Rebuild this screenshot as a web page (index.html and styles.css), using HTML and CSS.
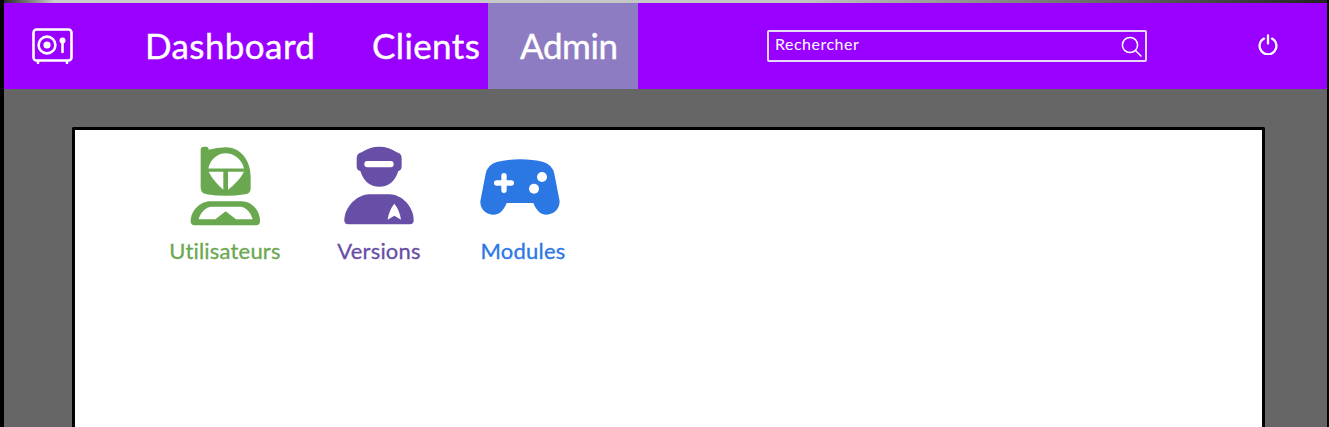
FILE: index.html
```html
<!DOCTYPE html>
<html lang="fr">
<head>
    <title>Admin</title>
    <link rel="stylesheet" href="styles.css">
</head>
<body>
    <header class="topbar">
        <a class="logo" href="#">
            <svg width="42" height="36" viewBox="0 0 42 36" fill="none" stroke="#fff">
                <rect x="1.5" y="1.5" width="38" height="31" rx="3" stroke-width="2.6"/>
                <path d="M6 33v2M35 33v2" stroke-width="2.6" stroke-linecap="round"/>
                <circle cx="15" cy="17" r="8.4" stroke-width="2.6"/>
                <circle cx="15" cy="17" r="3.6" fill="#fff" stroke="none"/>
                <circle cx="30.5" cy="12.5" r="3" fill="#fff" stroke="none"/>
                <path d="M30.5 13v11" stroke-width="2.6" stroke-linecap="round"/>
            </svg>
        </a>
        <nav class="menu">
            <a class="menu-item dashboard" href="#">Dashboard</a>
            <a class="menu-item clients" href="#">Clients</a>
            <a class="menu-item active" href="#">Admin</a>
        </nav>
        <div class="search">
            <span>Rechercher</span>
            <svg width="21" height="21" viewBox="0 0 21 21" fill="none" stroke="#fff" stroke-width="1.5">
                <circle cx="9" cy="9" r="7.6"/>
                <path d="M14.5 14.5l5.5 5.5" stroke-linecap="round"/>
            </svg>
        </div>
        <a class="power" href="#">
            <svg width="20" height="21" viewBox="0 0 20 21" fill="none" stroke="#fff" stroke-width="2.3" stroke-linecap="round">
                <path d="M6 4.6a8.4 8.4 0 1 0 8 0"/>
                <path d="M10 1.5v8"/>
            </svg>
        </a>
    </header>

    <main class="content">
        <section class="tiles">
            <a class="tile green" href="#">
                <svg width="71" height="80" viewBox="90 33 213 239" fill="#6aa84f">
                    <path d="M122 45Q122 35 132 35H138Q146 35 146 44Q170 36 197 36C242 36 272 75 272 125V160Q272 176 255 177Q197 186 140 177Q122 175 122 158Z"/>
                    <path d="M145 100C150 72 173 54 197 54C222 54 246 72 252 100Z" fill="#fff"/>
                    <path d="M146 110H190V164C172 148 156 130 146 110Z" fill="#fff"/>
                    <path d="M204 110H252C242 130 224 148 204 164Z" fill="#fff"/>
                    <path d="M92 258C92 225 122 198 150 198H245C275 198 300 225 300 258Q300 270 288 270H104Q92 270 92 258Z"/>
                    <path d="M116 252C122 232 138 215 155 215H240C258 215 272 232 278 252H228L197 228L166 252Z" fill="#fff"/>
                </svg>
                <span>Utilisateurs</span>
            </a>
            <a class="tile purple" href="#">
                <svg width="71" height="80" viewBox="59 33 213 240" fill="#674ea7">
                    <path d="M97 70Q97 55 112 52Q135 35 165 35Q195 35 217 52Q232 55 232 70V92Q232 106 222 108Q207 155 165 155Q123 155 108 108Q97 106 97 92Z"/>
                    <rect x="120" y="78" width="88" height="19" rx="9" fill="#fff"/>
                    <path d="M60 256C60 215 100 178 135 178H195C232 178 268 215 268 256Q268 268 256 268H72Q60 268 60 256Z"/>
                    <path d="M210 206C220 218 228 236 230 254L210 242L190 254C192 236 200 218 210 206Z" fill="#fff"/>
                </svg>
                <span>Versions</span>
            </a>
            <a class="tile blue" href="#">
                <svg width="80" height="56" viewBox="45 71 240 168" fill="#2b78e4">
                    <path d="M165 72Q205 72 235 80Q262 88 268 115L284 198C284 222 265 238 245 238C228 238 215 228 205 203H125C115 228 102 238 85 238C65 238 45 222 46 198L62 115Q68 88 95 80Q125 72 165 72Z"/>
                    <path d="M117 121V165M95 143H139" stroke="#fff" stroke-width="16" stroke-linecap="round"/>
                    <circle cx="231" cy="125" r="15" fill="#fff"/>
                    <circle cx="207" cy="160" r="15" fill="#fff"/>
                </svg>
                <span>Modules</span>
            </a>
        </section>
    </main>
</body>
</html>
```

FILE: styles.css
```css
body {
    margin: 0;
    height: 100vh;
    overflow: hidden;
    box-sizing: border-box;
    background-color: #666666;
    border-left: 4px solid #000;
    border-right: 2px solid #000;
    font-family: 'Lato', sans-serif;
}

a {
    color: inherit;
    text-decoration: none;
}

.topbar {
    display: flex;
    align-items: center;
    height: 86px;
    margin: 0 -1px 0 -2px;
    border-top: 3px solid #bbbbbb;
    border-image: linear-gradient(90deg, #222, #cccccc 4%, #c4c4c4 60%, #888888 75%, #222) 1;
    background-color: #9900ff;
    color: #fff;
}

.logo {
    display: flex;
    margin: 0 0 0 30px;
}

.menu {
    display: flex;
    align-self: stretch;
    margin-left: 71px;
}

.menu-item {
    display: flex;
    align-items: center;
    padding-bottom: 2px;
    font-size: 35px;
    letter-spacing: 0.4px;
    -webkit-text-stroke: 0.4px #fff;
}

.dashboard {
    width: 227px;
}

.clients {
    width: 116px;
}

.active {
    width: 150px;
    box-sizing: border-box;
    padding-left: 32px;
    background-color: #8e7cc3;
    letter-spacing: -0.4px;
}

.search {
    display: flex;
    align-items: center;
    justify-content: space-between;
    box-sizing: border-box;
    width: 380px;
    height: 32px;
    margin: 0 0 0 129px;
    padding: 0 3px 0 6px;
    border: 2px solid #e6d8f7;
    border-radius: 2px;
    font-size: 16px;
    letter-spacing: 0.5px;
}

.search span {
    margin-bottom: 5px;
}

.power {
    display: flex;
    margin: 0 0 3px 111px;
}

.content {
    box-sizing: border-box;
    height: 300px;
    margin: 38px 62px 0 68px;
    padding: 16px 0 0 73px;
    background-color: #fff;
    border: 3px solid #000;
    border-bottom: 0;
    border-radius: 2px 2px 0 0;
}

.tiles {
    display: grid;
    grid-template-columns: 154px 154px 134px;
}

.tile {
    display: flex;
    flex-direction: column;
    align-items: center;
    height: 118px;
    font-size: 22px;
    letter-spacing: 0.2px;
    -webkit-text-stroke: 0.3px currentColor;
}

.tile svg {
    flex-shrink: 0;
    margin-bottom: auto;
}

.blue svg {
    margin: 13px 6px auto 0;
}

.green {
    color: #6aa84f;
}

.purple {
    color: #674ea7;
}

.blue {
    color: #2b78e4;
}
```
